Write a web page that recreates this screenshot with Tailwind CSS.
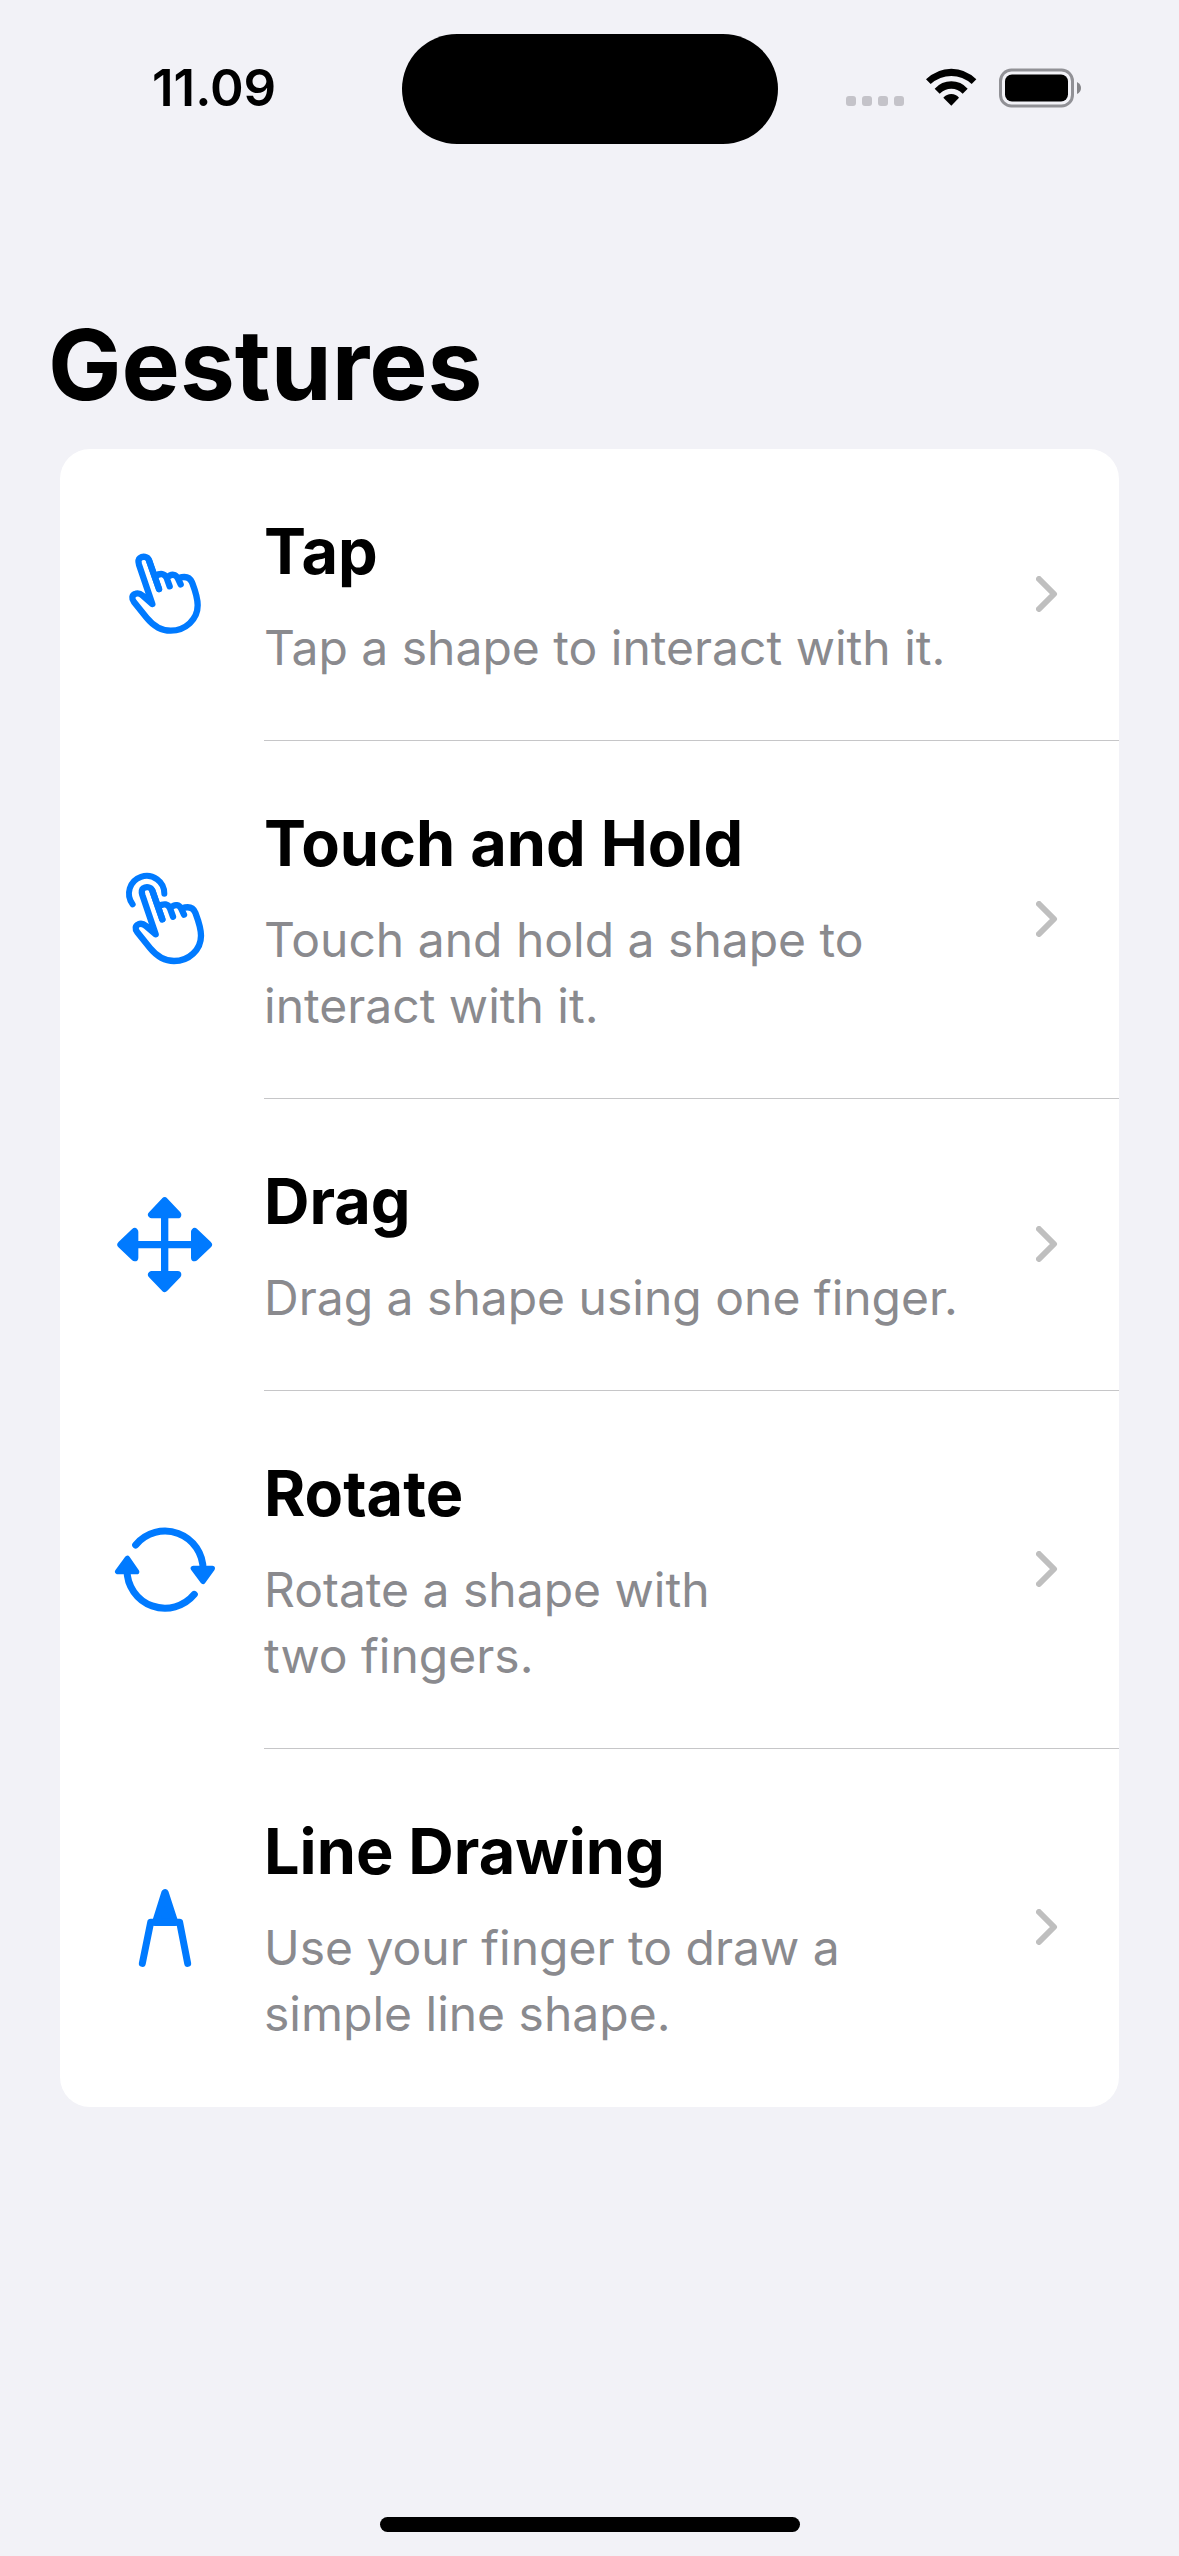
<!DOCTYPE html>
<html lang="en">
<head>
<meta charset="utf-8">
<meta name="viewport" content="width=device-width, initial-scale=1">
<title>Gestures</title>
<script src="https://cdn.jsdelivr.net/npm/@tailwindcss/browser@4"></script>
</head>
<body class="flex min-h-screen flex-col bg-[#f2f2f7] font-[Inter,sans-serif] text-black">
  <svg class="hidden" aria-hidden="true">
    <symbol id="hand" viewBox="0 0 390 390">
      <g fill="none" stroke="currentColor" stroke-width="19" stroke-linecap="round" stroke-linejoin="round">
        <path d="M177 177L147 91C143 79 128 78 120 84C115 88 114 94 117 104L157 222L128 197C119 189 111 189 105 192C96 196 94 206 102 216L140 263C158 285 180 302 212 302C257 302 293 268 293 226C293 201 285 181 276 157C269 141 254 138 236 144"/>
        <path d="M147 91L177 177M166 138C182 128 194 131 200 144L209 169M201 143C215 129 228 133 234 146L242 163"/>
      </g>
    </symbol>
    <symbol id="chevron" viewBox="0 0 22 36">
      <path d="M3 3L18 18L3 33" fill="none" stroke="currentColor" stroke-width="6" stroke-linecap="round" stroke-linejoin="round"/>
    </symbol>
  </svg>

  <header class="grid grid-cols-[1fr_376px_1fr] items-center pt-[34px]">
    <time class="pb-0.5 pl-[152px] text-[51px] leading-[60px] font-semibold">11.09</time>
    <div class="h-[110px] rounded-full bg-black"></div>
    <div class="flex items-center justify-end gap-[22px] pr-[97px] pb-[3px]">
      <svg class="h-10 w-[58px] text-[#c4c3c9]" viewBox="0 0 58 40" fill="currentColor" role="img" aria-label="No signal">
        <rect y="28" width="10" height="10" rx="3"/><rect x="16" y="28" width="10" height="10" rx="3"/><rect x="32" y="28" width="10" height="10" rx="3"/><rect x="48" y="28" width="10" height="10" rx="3"/>
      </svg>
      <svg class="h-10 w-[51px]" viewBox="319 85 153 120" role="img" aria-label="Wi-Fi">
        <path d="M319 119Q352 87 395 87T470 119L456 133Q429 109 395 109T333 133Z"/>
        <path d="M345 147Q366 125 395 125T444 147L429 162Q414 147 395 147T360 162Z"/>
        <path d="M371 174Q381 163 395 163T418 174L395 198Z"/>
      </svg>
      <svg class="h-10 w-[83px]" viewBox="0 0 83 40" role="img" aria-label="Battery full">
        <rect x="1.5" y="2" width="72" height="36" rx="11" fill="none" stroke="#919196" stroke-width="3"/>
        <rect x="6" y="6.500" width="63" height="27" rx="7"/>
        <path d="M78 14Q82 16 82 20T78 26Z" fill="#858589"/>
      </svg>
    </div>
  </header>

  <main class="flex-1 px-[60px] pt-[161px]">
    <h1 class="-ml-3 text-[98px] leading-[120px] font-bold">Gestures</h1>
    <ul class="mt-6 overflow-hidden rounded-[30px] bg-white">
      <li>
        <a href="#tap" class="flex items-center pl-10">
          <svg class="mr-[34px] size-[130px] text-[#007aff]"><use href="#hand"/></svg>
          <div class="flex flex-1 items-center justify-between border-b border-[#c6c6c8] pr-[61px]">
            <div class="pt-[62px] pb-[59px]">
              <h2 class="text-[63px] leading-20 font-bold">Tap</h2>
              <p class="mt-6 text-[48px] leading-[66px] text-[#8a8a8e]">Tap a shape to interact with it.</p>
            </div>
            <svg class="mb-0.5 h-9 w-[22px] text-[#bfbfbf]"><use href="#chevron"/></svg>
          </div>
        </a>
      </li>
      <li>
        <a href="#hold" class="flex items-center pl-10">
          <svg class="mr-[34px] size-[130px] text-[#007aff]" viewBox="0 0 390 390">
            <use href="#hand" x="10" y="16" width="390" height="390"/>
            <path d="M98 148A53 53 0 1 1 193 116" fill="none" stroke="currentColor" stroke-width="18" stroke-linecap="round"/>
          </svg>
          <div class="flex flex-1 items-center justify-between border-b border-[#c6c6c8] pr-[61px]">
            <div class="pt-[62px] pb-[59px]">
              <h2 class="text-[63px] leading-20 font-bold">Touch and Hold</h2>
              <p class="mt-6 text-[48px] leading-[66px] text-[#8a8a8e]">Touch and hold a shape to<br>interact with it.</p>
            </div>
            <svg class="mb-0.5 h-9 w-[22px] text-[#bfbfbf]"><use href="#chevron"/></svg>
          </div>
        </a>
      </li>
      <li>
        <a href="#drag" class="flex items-center pl-10">
          <svg class="mr-[34px] size-[130px] text-[#007aff]" viewBox="0 0 390 390" fill="currentColor" stroke="currentColor" stroke-width="22" stroke-linejoin="round">
            <path d="M194 90V300M90 194H300"/>
            <path d="M194 63L155 104H233ZM194 325L155 284H233ZM63 194L104 155V233ZM325 194L284 155V233Z"/>
          </svg>
          <div class="flex flex-1 items-center justify-between border-b border-[#c6c6c8] pr-[61px]">
            <div class="pt-[62px] pb-[59px]">
              <h2 class="text-[63px] leading-20 font-bold">Drag</h2>
              <p class="mt-6 text-[48px] leading-[66px] text-[#8a8a8e]">Drag a shape using one finger.</p>
            </div>
            <svg class="mb-0.5 h-9 w-[22px] text-[#bfbfbf]"><use href="#chevron"/></svg>
          </div>
        </a>
      </li>
      <li>
        <a href="#rotate" class="flex items-center pl-10">
          <svg class="mr-[34px] size-[130px] text-[#007aff]" viewBox="0 0 390 390" stroke="currentColor" stroke-linejoin="round">
            <path d="M107 120A114 114 0 0 1 309 195M283 268A114 114 0 0 1 81 195" fill="none" stroke-width="21" stroke-linecap="round"/>
            <path d="M280 190H337L309 229ZM53 200H110L82 160Z" fill="currentColor" stroke-width="16"/>
          </svg>
          <div class="flex flex-1 items-center justify-between border-b border-[#c6c6c8] pr-[61px]">
            <div class="pt-[62px] pb-[59px]">
              <h2 class="text-[63px] leading-20 font-bold">Rotate</h2>
              <p class="mt-6 text-[48px] leading-[66px] text-[#8a8a8e]">Rotate a shape with<br>two fingers.</p>
            </div>
            <svg class="mb-0.5 h-9 w-[22px] text-[#bfbfbf]"><use href="#chevron"/></svg>
          </div>
        </a>
      </li>
      <li>
        <a href="#line" class="flex items-center pl-10">
          <svg class="mr-[34px] size-[130px] text-[#007aff]" viewBox="0 -6 390 390" stroke="currentColor" stroke-linejoin="round" stroke-linecap="round">
            <path d="M127 295L152 172H239L263 295" fill="none" stroke-width="21"/>
            <path d="M195 83L167 172H224Z" fill="currentColor" stroke-width="22"/>
          </svg>
          <div class="flex flex-1 items-center justify-between pr-[61px]">
            <div class="pt-[62px] pb-[60px]">
              <h2 class="text-[63px] leading-20 font-bold">Line Drawing</h2>
              <p class="mt-6 text-[48px] leading-[66px] text-[#8a8a8e]">Use your finger to draw a<br>simple line shape.</p>
            </div>
            <svg class="mb-0.5 h-9 w-[22px] text-[#bfbfbf]"><use href="#chevron"/></svg>
          </div>
        </a>
      </li>
    </ul>
  </main>

  <footer class="flex justify-center pt-10 pb-6">
    <div class="h-[15px] w-[420px] rounded-full bg-black"></div>
  </footer>
</body>
</html>
